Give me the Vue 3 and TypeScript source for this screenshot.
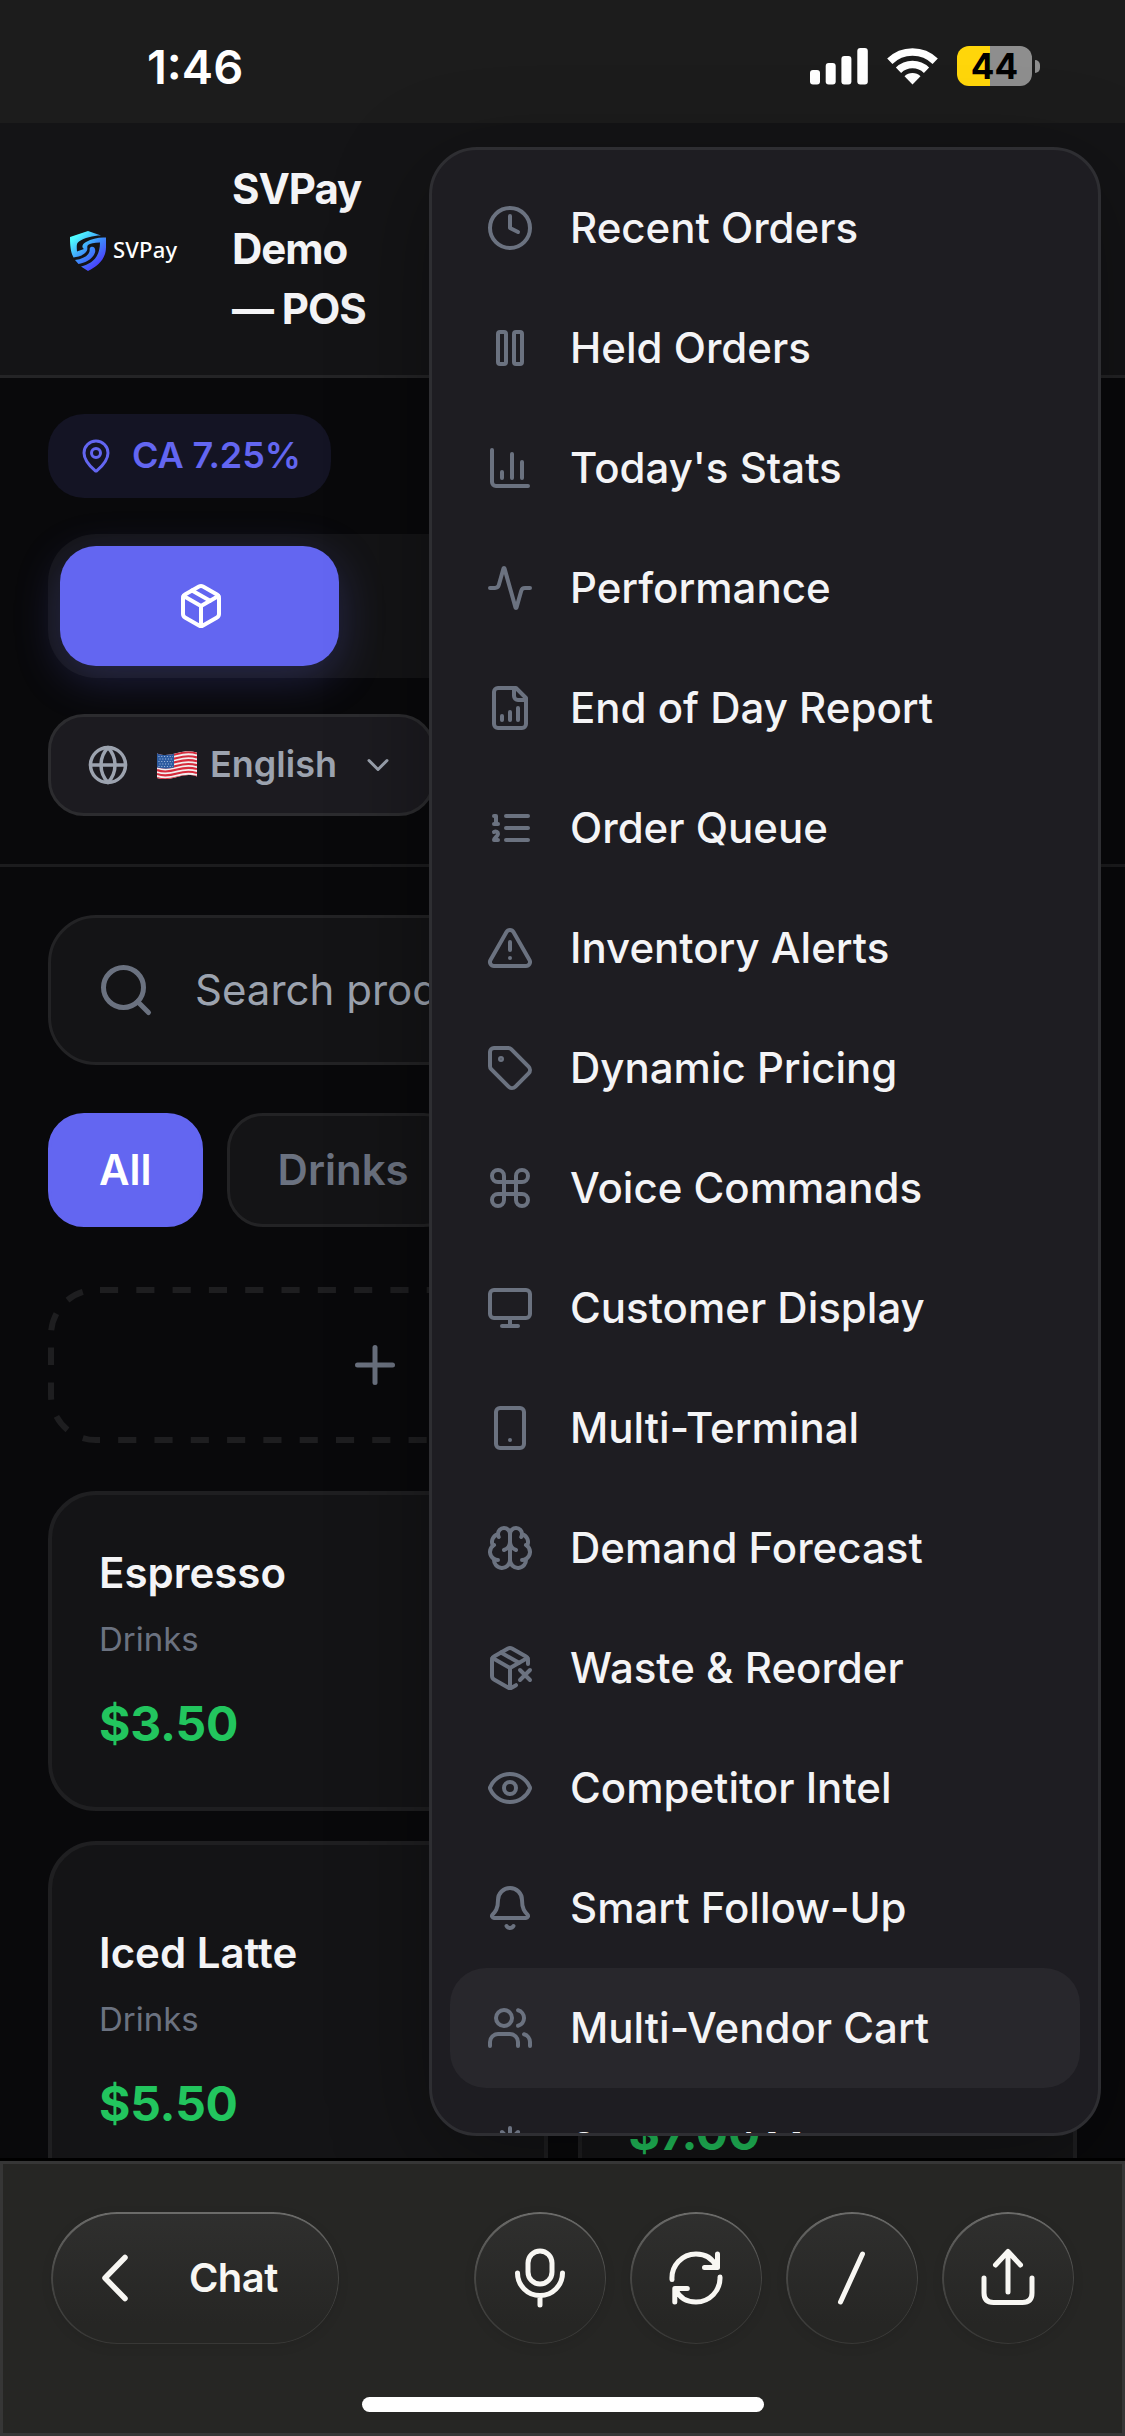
<script setup lang="ts">
interface MenuEntry {
  label: string
  icon: string
  active?: boolean
}

// 24x24 outline glyphs, drawn with the stroke of the surrounding <svg>
const glyphs: Record<string, string> = {
  clock: '<circle cx="12" cy="12" r="10"/><path d="M12 6v6l4 2"/>',
  pause: '<rect x="14" y="4" width="4" height="16" rx="1"/><rect x="6" y="4" width="4" height="16" rx="1"/>',
  chart: '<path d="M3 3v16a2 2 0 0 0 2 2h16"/><path d="M18 17V9"/><path d="M13 17V5"/><path d="M8 17v-3"/>',
  activity: '<path d="M22 12h-2.48a2 2 0 0 0-1.93 1.46l-2.35 8.36a.25.25 0 0 1-.48 0L9.24 2.18a.25.25 0 0 0-.48 0l-2.35 8.36A2 2 0 0 1 4.49 12H2"/>',
  report: '<path d="M15 2H6a2 2 0 0 0-2 2v16a2 2 0 0 0 2 2h12a2 2 0 0 0 2-2V7Z"/><path d="M14 2v4a2 2 0 0 0 2 2h4"/><path d="M8 18v-2"/><path d="M12 18v-4"/><path d="M16 18v-6"/>',
  queue: '<path d="M10 12h11"/><path d="M10 18h11"/><path d="M10 6h11"/><path d="M4 10h2"/><path d="M4 6h1v4"/><path d="M6 18H4c0-1 2-2 2-3s-1-1.5-2-1"/>',
  alert: '<path d="m21.73 18-8-14a2 2 0 0 0-3.48 0l-8 14A2 2 0 0 0 4 21h16a2 2 0 0 0 1.73-3"/><path d="M12 9v4"/><path d="M12 17h.01"/>',
  tag: '<path d="M12.586 2.586A2 2 0 0 0 11.172 2H4a2 2 0 0 0-2 2v7.172a2 2 0 0 0 .586 1.414l8.704 8.704a2.426 2.426 0 0 0 3.42 0l6.58-6.58a2.426 2.426 0 0 0 0-3.42z"/><circle cx="7.5" cy="7.5" r=".5" fill="currentColor"/>',
  command: '<path d="M15 6v12a3 3 0 1 0 3-3H6a3 3 0 1 0 3 3V6a3 3 0 1 0-3 3h12a3 3 0 1 0-3-3"/>',
  monitor: '<rect x="2" y="3" width="20" height="14" rx="2"/><path d="M8 21h8"/><path d="M12 17v4"/>',
  phone: '<rect x="5" y="2" width="14" height="20" rx="2"/><path d="M12 18h.01"/>',
  brain: '<path d="M12 5a3 3 0 1 0-5.997.125 4 4 0 0 0-2.526 5.77 4 4 0 0 0 .556 6.588A4 4 0 1 0 12 18Z"/><path d="M12 5a3 3 0 1 1 5.997.125 4 4 0 0 1 2.526 5.77 4 4 0 0 1-.556 6.588A4 4 0 1 1 12 18Z"/><path d="M15 13a4.5 4.5 0 0 1-3-4 4.5 4.5 0 0 1-3 4"/><path d="M17.599 6.5a3 3 0 0 0 .399-1.375"/><path d="M6.003 5.125A3 3 0 0 0 6.401 6.5"/><path d="M3.477 10.896a4 4 0 0 1 .585-.396"/><path d="M19.938 10.5a4 4 0 0 1 .585.396"/><path d="M6 18a4 4 0 0 1-1.967-.516"/><path d="M19.967 17.484A4 4 0 0 1 18 18"/>',
  packageX: '<path d="M21 10V8a2 2 0 0 0-1-1.73l-7-4a2 2 0 0 0-2 0l-7 4A2 2 0 0 0 3 8v8a2 2 0 0 0 1 1.73l7 4a2 2 0 0 0 2 0l2-1.14"/><path d="m7.5 4.27 9 5.15"/><path d="M3.29 7 12 12l8.71-5"/><path d="M12 22V12"/><path d="m17 13 5 5m-5 0 5-5"/>',
  eye: '<path d="M2.062 12.348a1 1 0 0 1 0-.696 10.75 10.75 0 0 1 19.876 0 1 1 0 0 1 0 .696 10.75 10.75 0 0 1-19.876 0"/><circle cx="12" cy="12" r="3"/>',
  bell: '<path d="M10.268 21a2 2 0 0 0 3.464 0"/><path d="M3.262 15.326A1 1 0 0 0 4 17h16a1 1 0 0 0 .74-1.673C19.41 13.956 18 12.499 18 8A6 6 0 0 0 6 8c0 4.499-1.411 5.956-2.738 7.326"/>',
  users: '<path d="M16 21v-2a4 4 0 0 0-4-4H6a4 4 0 0 0-4 4v2"/><circle cx="9" cy="7" r="4"/><path d="M22 21v-2a4 4 0 0 0-3-3.87"/><path d="M16 3.13a4 4 0 0 1 0 7.75"/>',
  snow: '<path d="M2 12h20"/><path d="M12 2v20"/><path d="m20 16-4-4 4-4"/><path d="m4 8 4 4-4 4"/><path d="m16 4-4 4-4-4"/><path d="m8 20 4-4 4 4"/>',
  package: '<path d="M11 21.73a2 2 0 0 0 2 0l7-4A2 2 0 0 0 21 16V8a2 2 0 0 0-1-1.73l-7-4a2 2 0 0 0-2 0l-7 4A2 2 0 0 0 3 8v8a2 2 0 0 0 1 1.73z"/><path d="M12 22V12"/><path d="M3.29 7 12 12l8.71-5"/><path d="m7.5 4.27 9 5.15"/>',
  pin: '<path d="M20 10c0 4.993-5.539 10.193-7.399 11.799a1 1 0 0 1-1.202 0C9.539 20.193 4 14.993 4 10a8 8 0 0 1 16 0"/><circle cx="12" cy="10" r="3"/>',
  globe: '<circle cx="12" cy="12" r="10"/><path d="M12 2a14.5 14.5 0 0 0 0 20 14.5 14.5 0 0 0 0-20"/><path d="M2 12h20"/>',
  chevron: '<path d="m6 9 6 6 6-6"/>',
  search: '<circle cx="11" cy="11" r="8"/><path d="m21 21-4.3-4.3"/>',
  plus: '<path d="M5 12h14"/><path d="M12 5v14"/>',
}

const menu: MenuEntry[] = [
  { label: 'Recent Orders', icon: 'clock' },
  { label: 'Held Orders', icon: 'pause' },
  { label: "Today's Stats", icon: 'chart' },
  { label: 'Performance', icon: 'activity' },
  { label: 'End of Day Report', icon: 'report' },
  { label: 'Order Queue', icon: 'queue' },
  { label: 'Inventory Alerts', icon: 'alert' },
  { label: 'Dynamic Pricing', icon: 'tag' },
  { label: 'Voice Commands', icon: 'command' },
  { label: 'Customer Display', icon: 'monitor' },
  { label: 'Multi-Terminal', icon: 'phone' },
  { label: 'Demand Forecast', icon: 'brain' },
  { label: 'Waste & Reorder', icon: 'packageX' },
  { label: 'Competitor Intel', icon: 'eye' },
  { label: 'Smart Follow-Up', icon: 'bell' },
  { label: 'Multi-Vendor Cart', icon: 'users', active: true },
  { label: 'Seasonal Menu', icon: 'snow' },
]

// 66x66 glyphs of the round toolbar buttons
const tools: { name: string; art: string }[] = [
  { name: 'Microphone', art: '<rect x="21" y="6" width="24" height="33" rx="12"/><path d="M10.500 28a22.500 22.500 0 0 0 45 0M33 51v9"/>' },
  { name: 'Refresh', art: '<path d="M9 34.500A24 24 0 0 1 33 9c10 0 17 5 20.500 13M54.500 9v13.500h-13M57 32a24 24 0 0 1-24 25c-10 0-17-5-20.500-13M11.800 57V43.500h12.500"/>' },
  { name: 'Slash', art: '<path d="M43.500 9 21.500 57"/>' },
  { name: 'Share', art: '<path d="M33 7v40M20.500 20 33 6.500 45.500 20M9 33v15q0 9.500 9.500 9.500h29q9.500 0 9.500-9.500V33"/>' },
]
</script>

<template>
  <div class="screen">
    <div class="status">
      <span class="time">1:46</span>
      <div class="status-icons">
        <svg width="58" height="38" viewBox="0 0 58 38" fill="#fff">
          <rect x="0" y="23" width="10" height="14.500" rx="3" />
          <rect x="15.700" y="16" width="10" height="21.500" rx="3" />
          <rect x="31.400" y="9" width="10" height="28.500" rx="3" />
          <rect x="47.300" y="1" width="10.500" height="36.500" rx="3" />
        </svg>
        <svg class="wifi" width="51" height="38" viewBox="0 0 51 38">
          <g fill="none" stroke="#fff" stroke-width="7.500">
            <path d="M2.800 14.200a32.500 32.500 0 0 1 45.400 0" />
            <path d="M11.500 23.300a20 20 0 0 1 28 0" />
          </g>
          <path d="M25.500 37.500 17.500 29.300a11.500 11.500 0 0 1 16 0z" fill="#fff" />
        </svg>
        <div class="battery"><span>44</span></div>
        <i class="nub"></i>
      </div>
    </div>

    <header class="header">
      <svg class="shield" width="36" height="40" viewBox="0 0 36 40">
        <defs>
          <linearGradient id="shield" x1="0" y1="0" x2="36" y2="40" gradientUnits="userSpaceOnUse">
            <stop offset=".15" stop-color="#4ffcff" />
            <stop offset=".5" stop-color="#3d8dfb" />
            <stop offset=".8" stop-color="#4a45fb" />
          </linearGradient>
        </defs>
        <g fill="url(#shield)">
          <path d="M0 6 18 0 31 4.500C23 4.500 14 7 9 10.500C6.500 12.500 6.500 14 7 20.500L14 18C11 16 12.500 13 16 11C22 7.500 29 6 36 6.500V16C36 28 28 35 18 40L11 35.500C22 33 30 26 30 11.500C24 11.500 20 12.500 18 14C16.500 15.500 18 17 17 19.500C15 24 8 26 3.500 26.500C1 22 0 16 0 6Z" />
          <path d="M5 29C13 28 18 25 19.500 20.500C20 18.500 19 17 21 16C24 15 26 18 25 21.500C23 28 15 32 8.500 33Z" />
        </g>
      </svg>
      <span class="brand">SVPay</span>
      <h1>SVPay<br />Demo<br />— POS</h1>
    </header>

    <section class="controls">
      <div class="tax">
        <svg class="ico" width="36" height="36" viewBox="0 0 24 24" v-html="glyphs.pin"></svg>
        <span>CA 7.25%</span>
      </div>
      <div class="segment">
        <div class="segment-on">
          <svg class="ico" width="48" height="48" viewBox="0 0 24 24" v-html="glyphs.package"></svg>
        </div>
      </div>
      <div class="lang">
        <svg class="ico" width="42" height="42" viewBox="0 0 24 24" v-html="glyphs.globe"></svg>
        <svg class="flag" width="40" height="28" viewBox="0 0 40 28">
          <defs>
            <clipPath id="wave"><path d="M0 2.500C7 5 13 4 20 2S33-.5 40 1.500V25.500C33 23 27 24 20 26S7 29 0 27Z" /></clipPath>
          </defs>
          <g clip-path="url(#wave)">
            <rect width="40" height="28" fill="#f1eeee" />
            <g fill="none" stroke="#d62a3b" stroke-width="2.100">
              <path v-for="n in 7" :key="n" :d="`M0 ${n * 3.9 - 0.4}c7 2.500 13 1.500 20-.5s13-2.500 20-.5`" />
            </g>
            <path d="M0 0H17V16.500C12 18 6 18 0 16.500Z" fill="#2c5ba0" />
            <g fill="none" stroke="#a9c0e0" stroke-width="1" stroke-dasharray="1 1.800">
              <path d="M1.500 5.500H16M2.500 8H16M1.500 10.500H16M2.500 13H16M1.500 15.500H16" />
            </g>
          </g>
        </svg>
        <span>English</span>
        <svg class="ico" width="36" height="36" viewBox="0 0 24 24" v-html="glyphs.chevron"></svg>
      </div>
    </section>

    <main class="catalog">
      <div class="search">
        <svg class="ico" width="60" height="60" viewBox="0 0 24 24" v-html="glyphs.search"></svg>
        <span>Search products</span>
      </div>
      <div class="chips">
        <span class="chip on">All</span>
        <span class="chip">Drinks</span>
      </div>
      <div class="custom">
        <svg class="dashes" width="1029" height="156" viewBox="0 0 1029 156">
          <path d="M52 3H48A45 45 0 0 0 3 48V108A45 45 0 0 0 48 153H52" pathLength="12" stroke-dasharray="1 1" stroke-dashoffset="1" />
          <path d="M52 3H981A45 45 0 0 1 1026 48V78" stroke-dasharray="18.150 18.150" />
          <path d="M52 153H981A45 45 0 0 0 1026 108V78" stroke-dasharray="18.150 18.150" stroke-dashoffset="18.150" />
        </svg>
        <svg class="ico" width="60" height="60" viewBox="0 0 24 24" v-html="glyphs.plus"></svg>
      </div>
      <div class="grid">
        <article class="card">
          <h2>Espresso</h2>
          <p>Drinks</p>
          <strong>$3.50</strong>
        </article>
        <article class="card"></article>
        <article class="card tall">
          <h2>Iced Latte</h2>
          <p>Drinks</p>
          <strong>$5.50</strong>
        </article>
        <article class="card tall end">
          <strong>$7.00</strong>
        </article>
      </div>
    </main>

    <nav class="menu">
      <div v-for="m in menu" :key="m.label" class="item" :class="{ active: m.active }">
        <svg class="ico" width="48" height="48" viewBox="0 0 24 24" v-html="glyphs[m.icon]"></svg>
        <span>{{ m.label }}</span>
      </div>
    </nav>

    <footer class="toolbar">
      <div class="tools">
        <div class="glass back">
          <svg width="32" height="54" viewBox="0 0 32 54"><path d="M26 6.500 6 27 26 47.500" /></svg>
          <span>Chat</span>
        </div>
        <div v-for="t in tools" :key="t.name" class="glass round" :aria-label="t.name">
          <svg width="66" height="66" viewBox="0 0 66 66" v-html="t.art"></svg>
        </div>
      </div>
      <i class="home"></i>
    </footer>
  </div>
</template>

<style>
body {
  background: #09090b;
}
</style>

<style scoped>
* {
  box-sizing: border-box;
}
.screen {
  position: relative;
  display: flex;
  flex-direction: column;
  width: 1125px;
  height: 2436px;
  overflow: hidden;
  background: #09090b;
  color: #f4f4f6;
  font-family: Inter, "Liberation Sans", sans-serif;
}
svg {
  display: block;
  flex: none;
}
.ico {
  fill: none;
  stroke: currentColor;
  stroke-width: 2;
  stroke-linecap: round;
  stroke-linejoin: round;
}

.status {
  flex: none;
  display: flex;
  justify-content: space-between;
  height: 123px;
  padding: 0 85px 0 147px;
  background: #1c1c1c;
}
.time {
  margin-top: 37px;
  font-size: 47px;
  line-height: 60px;
  font-weight: 600;
  color: #fff;
}
.status-icons {
  display: flex;
  align-items: flex-start;
  padding-top: 47px;
}
.wifi {
  margin: 0 19px 0 19px;
}
.battery {
  width: 75px;
  height: 40px;
  margin-top: -1px;
  border-radius: 12px;
  background: linear-gradient(90deg, #ffd60a 32.500px, #8e8e8e 32.500px);
  color: #000;
  font-size: 35px;
  line-height: 41px;
  font-weight: 700;
  text-align: center;
}
.nub {
  width: 5px;
  height: 13px;
  margin: 13px 0 0 3px;
  border-radius: 0 5px 5px 0;
  background: #8e8e8e;
}

.header {
  flex: none;
  display: flex;
  align-items: center;
  height: 255px;
  padding-left: 70px;
  border-bottom: 3px solid #242426;
  background: #141416;
}
.shield {
  margin-top: 3px;
}
.brand {
  width: 81px;
  margin-left: 7px;
  font-family: "Noto Sans", sans-serif;
  font-size: 22px;
  font-weight: 500;
  letter-spacing: 0.200px;
  color: #fff;
}
h1 {
  margin: 0 0 0 38px;
  font-size: 42px;
  line-height: 60px;
  font-weight: 700;
  letter-spacing: -1.050px;
}

.controls {
  flex: none;
  display: flex;
  flex-direction: column;
  align-items: flex-start;
  gap: 36px;
  height: 489px;
  padding: 36px 48px 0;
  border-bottom: 3px solid #1c1c1e;
}
.tax {
  display: flex;
  align-items: center;
  gap: 18px;
  width: 283px;
  height: 84px;
  padding-left: 30px;
  border-radius: 36px;
  background: #141424;
  color: #6366f1;
  font-size: 36px;
  font-weight: 600;
  letter-spacing: -0.150px;
  white-space: nowrap;
}
.tax span,
.lang span,
.search span,
.item span,
.back span {
  padding-bottom: 2px;
}
.segment {
  width: 1029px;
  height: 144px;
  padding: 12px;
  border-radius: 48px;
  background: #141416;
}
.segment-on {
  display: flex;
  align-items: center;
  justify-content: center;
  width: 279px;
  height: 120px;
  padding-left: 3px;
  border-radius: 36px;
  background: #6366f1;
  color: #fff;
  box-shadow: 0 12px 45px rgba(99, 102, 241, 0.250);
}
.lang {
  display: flex;
  align-items: center;
  width: 387px;
  height: 102px;
  padding: 0 36px;
  border: 3px solid #2c2c2f;
  border-radius: 36px;
  background: #1c1b20;
  color: #9ca3af;
  font-size: 36px;
  font-weight: 600;
}
.flag {
  margin: 0 13px 0 28px;
}
.lang .ico:last-child {
  margin-left: auto;
}

.catalog {
  flex: 1;
  min-height: 0;
  overflow: hidden;
  padding: 48px 48px 0;
}
.search {
  display: flex;
  align-items: center;
  gap: 39px;
  height: 150px;
  padding-left: 45px;
  border: 3px solid #232325;
  border-radius: 48px;
  background: #141416;
  color: #9ca3af;
  font-size: 42px;
  white-space: nowrap;
}
.search .ico {
  color: #6b7280;
}
.chips {
  display: flex;
  gap: 24px;
  margin: 48px 0 60px;
}
.chip {
  height: 114px;
  padding: 0 48px;
  border: 3px solid #232325;
  border-radius: 36px;
  background: #141416;
  color: #6b7280;
  font-size: 42px;
  line-height: 108px;
  font-weight: 600;
}
.chip.on {
  border-color: #6366f1;
  background: #6366f1;
  color: #fff;
}
.custom {
  position: relative;
  display: flex;
  align-items: center;
  height: 156px;
  padding-left: 297px;
  color: #6b7280;
}
.dashes {
  position: absolute;
  inset: 0;
  fill: none;
  stroke: #1e1e20;
  stroke-width: 6;
}
.grid {
  display: grid;
  grid-template-columns: 1fr 1fr;
  gap: 30px;
  margin-top: 48px;
}
.card {
  display: flex;
  flex-direction: column;
  justify-content: center;
  height: 320px;
  padding: 48px 47px;
  border: 4px solid #1f1f21;
  border-radius: 48px;
  background: #141416;
}
.card.tall {
  height: 380px;
}
.card.end {
  justify-content: flex-end;
}
h2 {
  margin: 0;
  font-size: 42px;
  line-height: 60px;
  font-weight: 600;
}
.card p {
  margin: 12px 0 24px;
  color: #6b7280;
  font-size: 33px;
  line-height: 49px;
}
.card strong {
  color: #22c55e;
  font-size: 48px;
  line-height: 72px;
  font-weight: 700;
  letter-spacing: -0.200px;
}

.menu {
  position: absolute;
  left: 429px;
  top: 147px;
  width: 672px;
  height: 1989px;
  overflow: hidden;
  padding: 18px;
  border: 3px solid #2e2e32;
  border-radius: 48px;
  background: #1e1d22;
  box-shadow: 0 24px 96px rgba(0, 0, 0, 0.350);
}
.item {
  display: flex;
  align-items: center;
  gap: 36px;
  height: 120px;
  padding-left: 36px;
  border-radius: 36px;
  font-size: 42px;
  font-weight: 500;
  white-space: nowrap;
}
.item .ico {
  color: #6b7280;
}
.item.active {
  background: #28272c;
}

.toolbar {
  position: relative;
  flex: none;
  height: 278px;
  border-top: 3px solid #000;
  background: #262624;
  box-shadow: inset 0 0 0 3px #363636;
}
.tools {
  display: flex;
  gap: 24px;
  padding: 51px 51px 0;
}
.glass {
  position: relative;
  display: flex;
  align-items: center;
  justify-content: center;
  width: 132px;
  height: 132px;
  border-radius: 66px;
  background: linear-gradient(#2f2f2e, #262624 85%);
  box-shadow: 0 3px 12px rgba(0, 0, 0, 0.080);
  color: #f8f7f3;
}
.glass::before {
  content: "";
  position: absolute;
  inset: 0;
  padding: 1.500px;
  border-radius: inherit;
  background: linear-gradient(#6c6c6a, #474745 50%, #383836);
  mask: linear-gradient(#000 0 0) content-box exclude, linear-gradient(#000 0 0);
}
.glass svg {
  fill: none;
  stroke: currentColor;
  stroke-width: 5;
  stroke-linecap: round;
  stroke-linejoin: round;
}
.back {
  justify-content: flex-start;
  width: 288px;
  margin-right: 111px;
  padding-left: 48px;
  font-size: 40px;
  font-weight: 600;
  letter-spacing: -0.600px;
}
.back svg {
  stroke-width: 5.500;
}
.back span {
  margin-left: 58px;
}
.home {
  display: block;
  width: 402px;
  height: 15px;
  margin: 53px 0 0 362px;
  border-radius: 8px;
  background: #fff;
}
</style>
